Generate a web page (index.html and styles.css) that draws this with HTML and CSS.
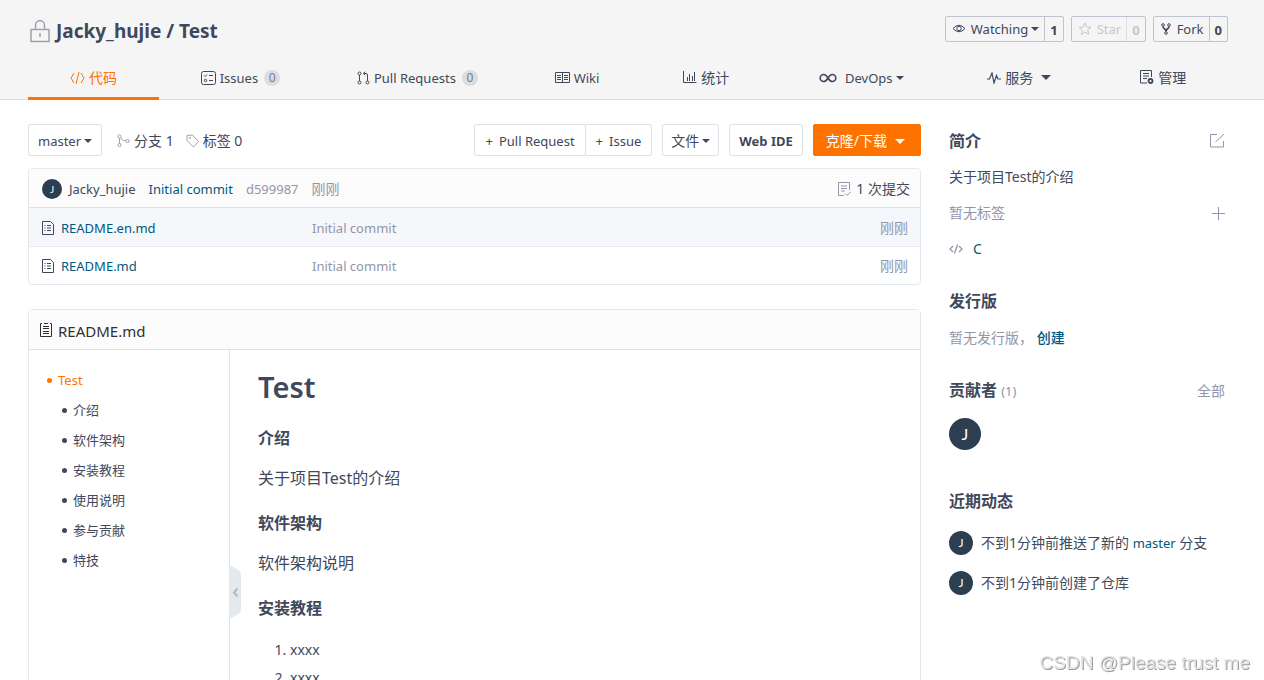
FILE: index.html
```html
<!DOCTYPE html>
<html lang="zh-CN">
<head>
<meta charset="utf-8">
<title>Jacky_hujie / Test</title>
<link rel="stylesheet" href="styles.css">
</head>
<body>
<header class="head">
  <div class="title-row">
    <h1 class="title">
      <svg class="lock" width="20" height="23" viewBox="0 0 20 23"><path d="M1 9.500h18v12h-18zM5.500 9v-4a4.500 4.200 0 0 1 9 0v4M10 13v4"/></svg>
      <span><a href="#">Jacky_hujie</a> / <a href="#">Test</a></span>
    </h1>
    <div class="social">
      <div class="pair">
        <button type="button"><svg class="ic" width="14" height="14" viewBox="0 0 14 14"><path d="M1 6.500Q7 0 13 6.500Q7 13 1 6.500z"/><circle cx="7" cy="6.500" r="2.200"/></svg>Watching<i class="caret"></i></button>
        <a class="count" href="#">1</a>
      </div>
      <div class="pair off">
        <button type="button" disabled><svg class="ic" width="14" height="14" viewBox="0 0 14 14"><path d="M7 1l1.700 4 4.300.3-3.300 2.800 1.100 4.400L7 10.100l-3.800 2.400 1.100-4.400L1 5.300 5.300 5z"/></svg>Star</button>
        <span class="count">0</span>
      </div>
      <div class="pair">
        <button type="button"><svg class="ic" width="12" height="14" viewBox="0 0 12 14"><circle cx="3" cy="3" r="1.300"/><circle cx="9" cy="3" r="1.300"/><circle cx="6" cy="11" r="1.300"/><path stroke-width="1.600" d="M3 4.500C3 7 6 6.500 6 9.500C6 6.500 9 7 9 4.500"/></svg>Fork</button>
        <a class="count" href="#">0</a>
      </div>
    </div>
  </div>
  <nav class="tabs">
    <a class="tab active" href="#"><svg class="ic" width="15" height="14" viewBox="0 0 15 14"><path d="M4 2L1 7l3 5M11 2l3 5-3 5M9 1L6 13"/></svg>代码</a>
    <a class="tab latin" href="#"><svg class="ic" width="15" height="14" viewBox="0 0 15 14"><rect x=".5" y=".5" width="14" height="13" rx="2"/><path d="M3 4.500l1 1 2-2M8 4.500h4M8 9.500h4"/><circle cx="4.500" cy="9.500" r="1.200"/></svg>Issues<span class="badge">0</span></a>
    <a class="tab latin" href="#"><svg class="ic" width="13" height="14" viewBox="0 0 13 14"><circle cx="2.500" cy="2.500" r="1.500"/><circle cx="2.500" cy="11.500" r="1.500"/><circle cx="10.500" cy="11.500" r="1.500"/><path d="M2.500 4v6M10.500 10V4q0-1.500-1.500-1.500H6.500M8.200.7L6.300 2.500l1.900 1.800"/></svg>Pull Requests<span class="badge">0</span></a>
    <a class="tab latin" href="#"><svg class="ic" width="15" height="12" viewBox="0 0 15 12"><path d="M.5.500h14v10H.5zM7.500.5v10M2 3.500h4M2 5.500h4M2 7.500h4M9 3.500h4M9 5.500h4M9 7.500h4"/></svg>Wiki</a>
    <a class="tab" href="#"><svg class="ic" width="14" height="13" viewBox="0 0 14 13"><path d="M.5 0v11.500h13M4.500 10V6M6.500 10V3M9.500 10V5M11.500 10V1"/></svg>统计</a>
    <a class="tab latin" href="#"><svg class="ic wide" width="18" height="10" viewBox="0 0 18 10"><path stroke-width="1.600" d="M9 5C7.500 2.500 6.500 1.500 4.700 1.500a3.500 3.500 0 0 0 0 7C6.500 8.500 7.500 7.500 9 5s2.500-3.500 4.300-3.500a3.500 3.500 0 0 1 0 7C11.500 8.500 10.500 7.500 9 5z"/></svg>DevOps<i class="caret"></i></a>
    <a class="tab" href="#"><svg class="ic" width="14" height="12" viewBox="0 0 14 12"><path stroke-width="1.200" d="M0 7h2.500L5 1l2 10L9.500 3.500 11 7h3"/></svg>服务<i class="caret far"></i></a>
    <a class="tab" href="#"><svg class="ic" width="14" height="15" viewBox="0 0 14 15"><path d="M11.500 7V.5H.5v12.500H7M3 3.500h6M3 6h6M3 8.500h4"/><circle cx="10.500" cy="11" r="2" stroke-width="1.800"/></svg>管理</a>
  </nav>
</header>

<div class="layout">
  <main class="main">
    <div class="toolbar">
      <button class="btn" type="button">master<i class="caret"></i></button>
      <a class="meta" href="#"><svg class="ic" width="13" height="14" viewBox="0 0 13 14"><circle cx="2.500" cy="2.500" r="1.600"/><circle cx="2.500" cy="11" r="1.600"/><circle cx="10.500" cy="7" r="1.600"/><path d="M2.500 4v5.500M3.500 3.500Q5 7 9 7"/></svg>分支 1</a>
      <a class="meta" href="#"><svg class="ic" width="13" height="14" viewBox="0 0 13 14"><path d="M1 1.500l5.500-.5 6 6.500-5 5.500-6.500-6.500z"/><circle cx="4" cy="4" r=".6"/></svg>标签 0</a>
      <div class="actions">
        <div class="group"><button class="btn" type="button"><span class="plus">+</span>Pull Request</button><button class="btn" type="button"><span class="plus">+</span>Issue</button></div>
        <button class="btn cjk" type="button">文件<i class="caret"></i></button>
        <button class="btn strong" type="button">Web IDE</button>
        <button class="btn cjk primary" type="button">克隆/下载<i class="caret far"></i></button>
      </div>
    </div>

    <section class="files">
      <div class="commit">
        <span class="avatar small">J</span>
        <a class="author" href="#">Jacky_hujie</a>
        <a class="link" href="#">Initial commit</a>
        <span class="muted">d599987</span>
        <span class="muted cjk">刚刚</span>
        <a class="commits cjk" href="#"><svg class="ic" width="13" height="15" viewBox="0 0 13 15"><path d="M11.500 8V.5H.5v13H6M3 4h6M3 6.500h6M3 9h4M7 11.500l2 2 3.500-3.500"/></svg>1 次提交</a>
      </div>
      <table class="list">
        <tr class="hover">
          <td class="name"><a href="#"><svg class="ic" width="12" height="14" viewBox="0 0 12 14"><path d="M.5.500h8l3 3v10H.5zM5 4.500h4M5 7h4M5 9.500h4M2.500 4.500h1M2.500 7h1M2.500 9.500h1"/></svg>README.en.md</a></td>
          <td>Initial commit</td><td class="when">刚刚</td>
        </tr>
        <tr>
          <td class="name"><a href="#"><svg class="ic" width="12" height="14" viewBox="0 0 12 14"><path d="M.5.500h8l3 3v10H.5zM5 4.500h4M5 7h4M5 9.500h4M2.500 4.500h1M2.500 7h1M2.500 9.500h1"/></svg>README.md</a></td>
          <td>Initial commit</td><td class="when">刚刚</td>
        </tr>
      </table>
    </section>

    <section class="readme">
      <div class="readme-head"><svg class="ic" width="12" height="15" viewBox="0 0 12 15"><path d="M2 .5H.5v13h11V.5H10M4 .5h4M3 3.500h6M3 5.500h6M3 8.500h6M3 10.500h6"/></svg>README.md</div>
      <div class="readme-body">
        <nav class="toc">
          <ul>
            <li class="on"><a href="#">Test</a>
              <ul>
                <li><a href="#">介绍</a></li>
                <li><a href="#">软件架构</a></li>
                <li><a href="#">安装教程</a></li>
                <li><a href="#">使用说明</a></li>
                <li><a href="#">参与贡献</a></li>
                <li><a href="#">特技</a></li>
              </ul>
            </li>
          </ul>
          <button class="fold" type="button" aria-label="收起目录"><svg width="12" height="54" viewBox="0 0 12 54"><path class="fold-bg" d="M0 0l8 4q4 2 4 6v34q0 4-4 6l-8 4z"/><path class="fold-arrow" d="M8.500 23.500L5 27.500l3.500 4"/></svg></button>
        </nav>
        <article class="doc">
          <h1>Test</h1>
          <h4>介绍</h4>
          <p>关于项目Test的介绍</p>
          <h4>软件架构</h4>
          <p>软件架构说明</p>
          <h4>安装教程</h4>
          <ol><li>xxxx</li><li>xxxx</li></ol>
        </article>
      </div>
    </section>
  </main>

  <aside class="side">
    <section class="intro">
      <div class="between"><h2>简介</h2><button class="bare" type="button" aria-label="编辑"><svg class="ic" width="16" height="16" viewBox="0 0 16 16"><path d="M8 1.500H1.500v12.500h13V8M6.500 9L15 1"/></svg></button></div>
      <p>关于项目Test的介绍</p>
      <div class="between muted"><span>暂无标签</span><button class="bare" type="button" aria-label="添加标签"><svg class="ic" width="13" height="13" viewBox="0 0 13 13"><path d="M6.500 0v13M0 6.500h13"/></svg></button></div>
      <div class="lang"><svg class="ic" width="14" height="10" viewBox="0 0 14 10"><path stroke-width="1.300" d="M4 2L1 5l3 3M10 2l3 3-3 3M8.500.5l-3 9"/></svg><a class="link" href="#">C</a></div>
    </section>
    <section class="release">
      <h2>发行版</h2>
      <p class="muted">暂无发行版， <a class="link mid" href="#">创建</a></p>
    </section>
    <section class="people">
      <div class="between"><h2>贡献者 <small>(1)</small></h2><a class="muted" href="#">全部</a></div>
      <a class="avatar large" href="#">J</a>
    </section>
    <section class="activity">
      <h2>近期动态</h2>
      <div class="event"><span class="avatar">J</span><span>不到1分钟前推送了新的 <a class="link latin" href="#">master</a> 分支</span></div>
      <div class="event"><span class="avatar">J</span><span>不到1分钟前创建了仓库</span></div>
    </section>
  </aside>
</div>
<div class="watermark">CSDN @Please trust me</div>
</body>
</html>
```
FILE: styles.css
```css
* { box-sizing: border-box; }
body {
  margin: 0;
  height: 100vh;
  overflow: hidden;
  background: #fff;
  color: #40485b;
  font: 14px/20px "Noto Sans", "Noto Sans CJK SC", sans-serif;
}
a { color: inherit; text-decoration: none; }
button { font: inherit; color: inherit; cursor: pointer; }
h1, h2, h4, p, ul, ol { margin: 0; padding: 0; }
.latin { font-size: 13px; }
.ic { flex: none; fill: none; stroke: currentColor; stroke-width: 1; }
.caret {
  display: inline-block;
  border: 4px solid transparent;
  border-top-color: currentColor;
  border-bottom: 0;
  margin-left: 3px;
}
.caret.far { margin-left: 8px; border-width: 5px 5px 0; }
.muted { color: #9296a8; }
.link { color: #005980; }

.head {
  background: #f5f5f5;
  border-bottom: 1px solid #dcdddf;
  padding: 16px 36px 0 28px;
}
.title-row { display: flex; justify-content: space-between; align-items: flex-start; height: 40px; }
.title { display: flex; align-items: center; gap: 6px; padding-left: 2px; font-size: 19px; line-height: 30px; }
.lock { fill: none; stroke: #9ba2b4; stroke-width: 1.500; }
.social { display: flex; gap: 7px; }
.pair { display: flex; height: 26px; border: 1px solid #bfc2cf; border-radius: 2px; font-size: 13px; line-height: 26px; }
.pair button { display: flex; align-items: center; padding: 0 5px 0 6px; border: 0; background: none; }
.pair .ic { margin-right: 5px; }
.count { padding: 0 5px; border-left: 1px solid #bfc2cf; font-weight: 700; }
.off { color: #c6c8cb; }
.off .count { border-left-color: #dcdde0; }

.tabs { display: flex; height: 44px; margin-bottom: -1px; }
.tab { display: flex; flex: 1 0 auto; align-items: center; justify-content: center; padding-top: 2px; border-bottom: 3px solid transparent; }
.tab .ic { margin-right: 4px; }
.tab .wide { margin: 0 8px 0 6px; }
.tab .far { margin-right: 5px; }
.tab.active { color: #fe7300; border-bottom-color: #fe7300; }
.badge { min-width: 16px; margin: 0 -7px 0 6px; border-radius: 8px; background: #dcdddf; color: #6f7c98; font-size: 12px; line-height: 16px; text-align: center; }

.layout { display: flex; gap: 28px; padding: 24px 36px 0 28px; }
.main { flex: 1; min-width: 0; }
.side { flex: none; width: 279px; }

.toolbar { display: flex; align-items: center; gap: 12px; margin-bottom: 12px; }
.btn { display: flex; align-items: center; height: 32px; padding: 2px 9px 0; border: 1px solid #dce3e8; border-radius: 2px; background: #fff; font-size: 13px; }
.btn.cjk { padding: 2px 8px 0; font-size: 14px; }
.meta { display: flex; align-items: center; gap: 4px; padding-top: 2px; }
.meta:first-of-type { margin-left: 3px; }
.meta .ic { color: #9ba2b4; }
.actions { display: flex; gap: 10px; margin-left: auto; }
.group { display: flex; }
.group .btn { padding: 2px 10px 0; }
.group .btn + .btn { margin-left: -1px; }
.plus { margin-right: 6px; }
.strong { font-weight: 700; }
.btn.primary { padding: 2px 15px 0 12px; background: #fe7300; border-color: #fe7300; color: #fff; }

.files { border: 1px solid #e3e9ed; border-radius: 4px; overflow: hidden; font-size: 13px; }
.commit { display: flex; align-items: center; gap: 13px; height: 39px; padding: 2px 10px 0 13px; background: #fcfcfc; border-bottom: 1px solid #dfe3e8; }
.files .cjk { font-size: 14px; }
.author { margin-left: -6px; }
.commits { display: flex; align-items: center; gap: 5px; margin-left: auto; }
.commits .ic { color: #9296a8; }
.avatar { display: flex; flex: none; align-items: center; justify-content: center; width: 24px; height: 24px; border-radius: 50%; background: #2c3e50; color: #fff; font: 12px/20px Lato, sans-serif; }
.avatar.small { width: 20px; height: 20px; font-size: 10px; }
.avatar.large { width: 32px; height: 32px; font-size: 16px; }
.list { width: 100%; border-collapse: collapse; color: #9296a8; }
.list td { height: 38px; padding: 2px 12px 0 0; }
.list .hover { background: #f5f7fb; border-bottom: 1px solid #e7ebf0; }
.list .name { width: 283px; padding-left: 13px; color: #005980; }
.list a { display: flex; align-items: center; gap: 7px; }
.list .ic { color: #40485b; }
.list .when { text-align: right; font-size: 14px; }

.readme { margin-top: 24px; border: 1px solid #e3e9ed; border-radius: 4px; }
.readme-head { display: flex; align-items: center; gap: 6px; height: 40px; padding: 2px 11px 0; background: #fcfcfc; border-bottom: 1px solid #dfe3e8; color: #303030; font-size: 15px; }
.readme-body { display: flex; }
.toc { position: relative; flex: none; width: 201px; padding: 15px 0 0 29px; border-right: 1px solid #dfe3e8; font-size: 13px; line-height: 30px; }
.toc ul { list-style: none; }
.toc ul ul { padding-left: 15px; color: #40485b; }
.toc li::before { content: ""; float: left; width: 5px; height: 5px; margin: 13px 0 0 -11px; border-radius: 50%; background: currentColor; }
.toc .on { color: #fe7300; }
.fold { position: absolute; left: 200px; top: 215px; padding: 0; border: 0; background: none; line-height: 0; }
.fold-bg { fill: #e3e9ed; }
.fold-arrow { fill: none; stroke: #b4b9c8; stroke-width: 2; }
.doc { flex: 1; padding: 16px 28px; font-size: 16px; line-height: 24px; }
.doc h1 { font-size: 29px; font-weight: 600; line-height: 42px; margin-bottom: 18px; }
.doc h4 { font-size: 16px; font-weight: 600; line-height: 24px; margin-bottom: 16px; }
.doc p { margin-bottom: 21px; }
.doc ol { padding-left: 32px; font-size: 14px; line-height: 28px; }

.side h2 { font-size: 16px; font-weight: 600; line-height: 24px; }
.side small { color: #9296a8; font-size: 13px; font-weight: 400; }
.between { display: flex; align-items: center; justify-content: space-between; padding-right: 3px; }
.bare { padding: 0; border: 0; background: none; line-height: 0; color: #9296a8; }
.intro { display: grid; gap: 16px; padding-top: 7px; }
.intro .between { height: 20px; }
.lang { display: flex; align-items: center; gap: 10px; color: #9296a8; }
.release { display: grid; gap: 15px; margin-top: 30px; }
.mid { font-weight: 500; }
.people { display: grid; gap: 15px; margin-top: 30px; }
.activity { display: grid; gap: 16px; margin-top: 39px; }
.activity h2 { margin-bottom: 2px; }
.event { display: flex; align-items: center; gap: 8px; height: 24px; }

.watermark {
  position: fixed;
  right: 14px;
  bottom: 5px;
  color: #e2e2e2;
  font: 19px/24px "Liberation Sans", sans-serif;
  text-shadow: 1px 1px 0 #999;
}
```
